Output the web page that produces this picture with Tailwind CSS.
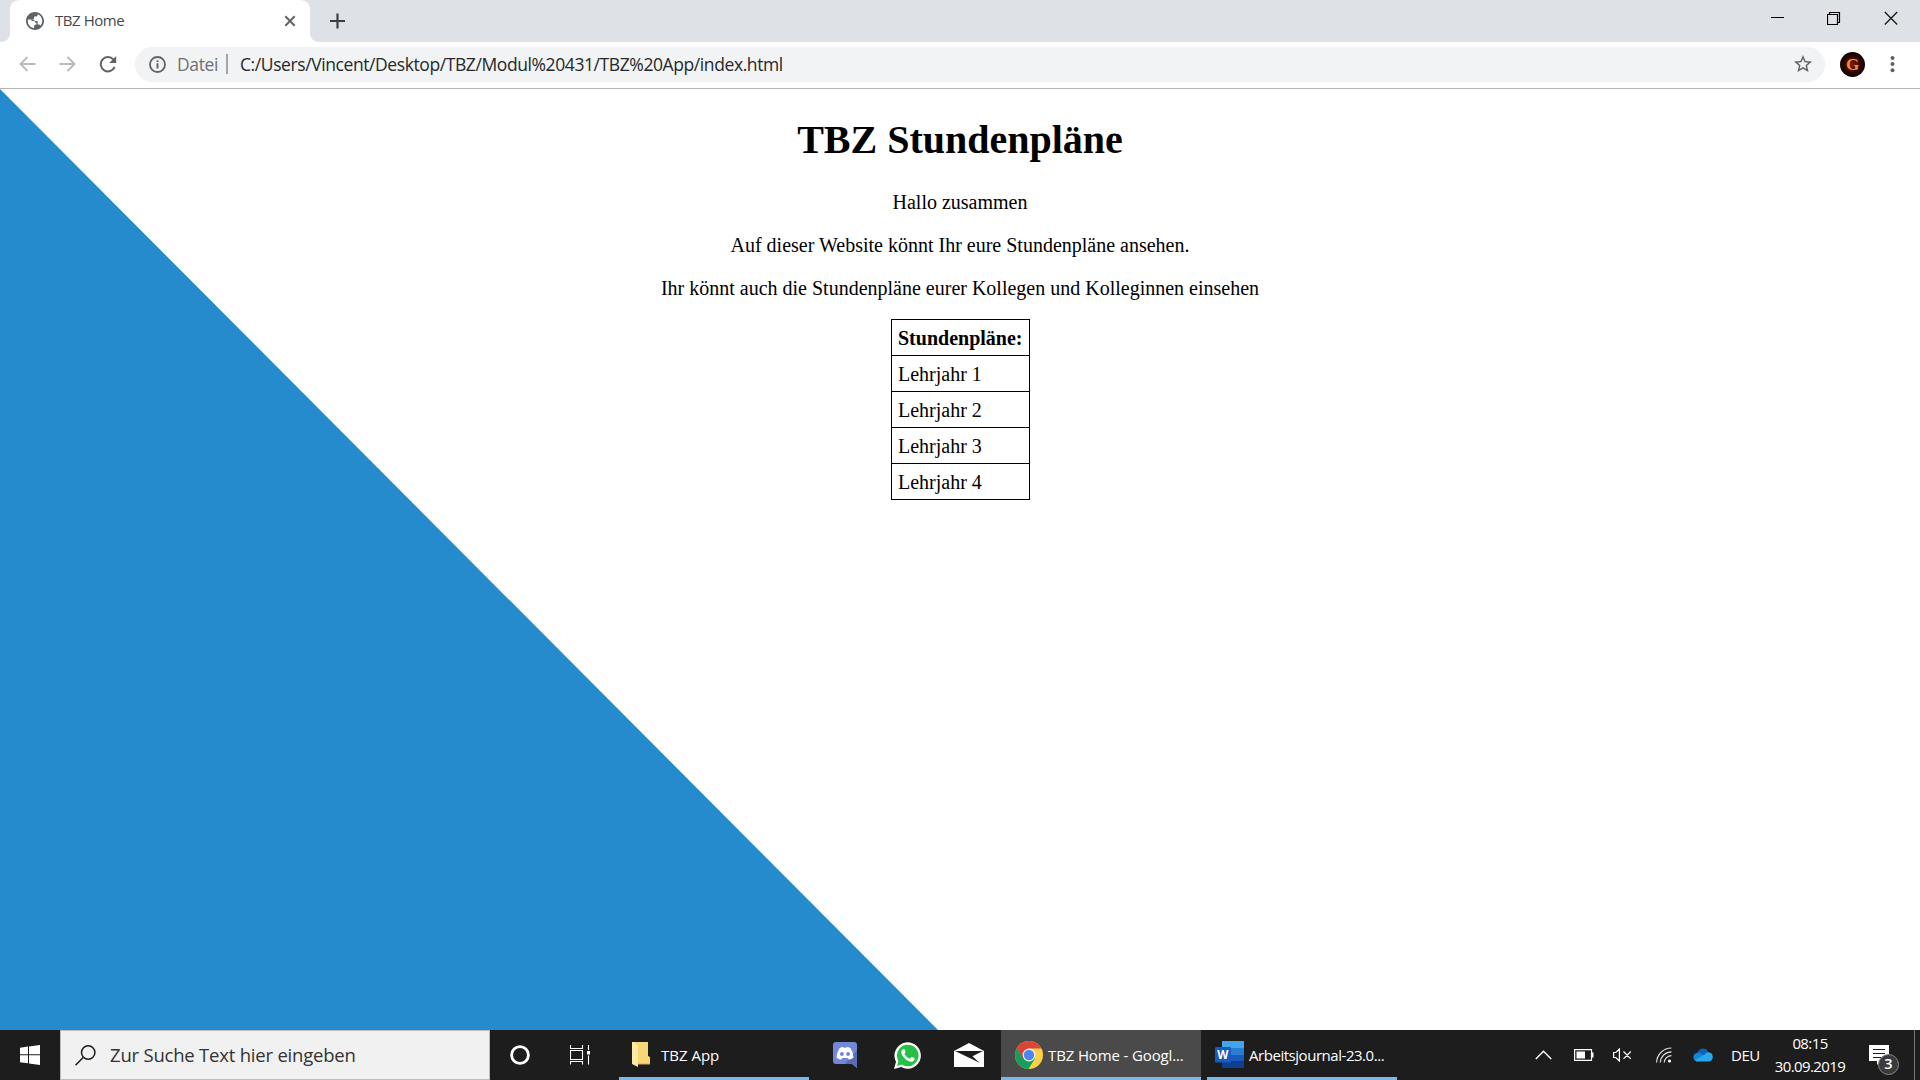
<!DOCTYPE html>
<html lang="de">
<head>
<meta charset="utf-8">
<title>TBZ Home</title>
<script src="https://cdn.jsdelivr.net/npm/@tailwindcss/browser@4"></script>
</head>
<body class="w-[1920px] h-[1080px] overflow-hidden flex flex-col bg-white font-['Open_Sans',sans-serif]">

<!-- Tab strip -->
<header class="h-[42px] shrink-0 bg-[#dee1e6] flex">
  <div class="w-[320px] h-[42px] relative shrink-0">
    <svg class="absolute inset-0" width="320" height="42"><path d="M0 42C7 42 10 38 10 32V10Q10 0 20 0H300Q310 0 310 10V32C310 38 313 42 320 42Z" fill="#fff"/></svg>
    <div class="relative flex items-center h-[42px] pl-[26px]">
      <svg width="18" height="18" viewBox="2 2 20 20" class="shrink-0"><path d="M12 2C6.480 2 2 6.480 2 12s4.480 10 10 10 10-4.480 10-10S17.520 2 12 2zm-1 17.930c-3.950-.49-7-3.850-7-7.930 0-.62.08-1.210.21-1.790h5.300c1.300 0 2.200.9 2.200 2s.9 1.700 1.900 1.900v1.900c-1.600 0-2.600.8-2.600 2zm6.900-2.540c-.26-.81-1-1.390-1.900-1.390h-1v-3c0-.55-.45-1-1-1H8v-2h2c.55 0 1-.45 1-1V7h2c1.100 0 2-.9 2-2v-.410c2.930 1.190 5 4.060 5 7.410 0 2.080-.8 3.970-2.100 5.390z" fill="#5f6368"/></svg>
      <span class="ml-[11px] mb-[2px] w-[216px] text-[15px] leading-5 tracking-[-0.45px] text-[#45494d]">TBZ Home</span>
      <svg class="ml-[13px] shrink-0" width="12" height="12" viewBox="0 0 12 12"><path d="M1.300 1.300l9.400 9.400M10.700 1.300l-9.400 9.400" stroke="#5f6368" stroke-width="2"/></svg>
    </div>
  </div>
  <svg class="mt-[13px] ml-[9px]" width="16" height="16" viewBox="0 0 16 16"><path d="M8.500 .5v15M1 8h15" stroke="#3c4043" stroke-width="2.200"/></svg>
  <div class="ml-auto flex pt-[11px]">
    <svg width="14" height="14" class="mr-[42px]"><path d="M0 6.500h13" stroke="#000"/></svg>
    <svg width="14" height="14" class="mr-[43px]"><path d="M.5 3.500h10v10h-10zM2.500 3V1.500h10v10h-1.500" fill="none" stroke="#000" stroke-width="1.200"/></svg>
    <svg width="14" height="14" class="mr-[22px]"><path d="M.8 1l12.400 12.500M13.200 1L.8 13.500" stroke="#111" stroke-width="1.200"/></svg>
  </div>
</header>

<!-- Toolbar -->
<div class="h-[47px] shrink-0 flex items-center pb-[2px] border-b border-[#b6b4b6] bg-white">
  <svg class="ml-[19px]" width="17" height="16" viewBox="0 0 17 16" fill="none" stroke="#b9bbbd" stroke-width="1.900"><path d="M16.500 8H2M8.500 1L1.500 8l7 7"/></svg>
  <svg class="ml-[23px]" width="17" height="16" viewBox="0 0 17 16" fill="none" stroke="#b9bbbd" stroke-width="1.900"><path d="M.5 8H15M8.500 1l7 7-7 7"/></svg>
  <svg class="ml-[23px]" width="18" height="18" viewBox="0 0 18 18"><path d="M15.600 12A7.200 7.200 0 1 1 14.300 4.300L16 5.500" fill="none" stroke="#5f6368" stroke-width="2"/><path d="M17.200 1v7h-7z" fill="#5f6368"/></svg>
  <div class="ml-[18px] w-[1690px] h-[35px] rounded-full bg-[#f1f3f4] flex items-center text-[17.500px] leading-6">
    <svg class="ml-[14px] shrink-0" width="17" height="17" viewBox="0 0 17 17"><circle cx="8.500" cy="8.500" r="7.500" fill="none" stroke="#5f6368" stroke-width="1.800"/><path d="M8.500 7.200v5.300M8.500 4.200v1.900" stroke="#5f6368" stroke-width="1.900"/></svg>
    <span class="ml-[11px] w-[41px] text-[#6d7175] tracking-[-0.350px]">Datei</span>
    <span class="ml-[8px] w-[2px] h-5 bg-[#a2a5a8]"></span>
    <span class="ml-[12px] text-[#26282b] tracking-[-0.410px] whitespace-nowrap">C:/Users/Vincent/Desktop/TBZ/Modul%20431/TBZ%20App/index.html</span>
    <svg class="ml-auto mr-[13px]" width="18" height="18" viewBox="2 2 20 20"><path d="M22 9.240l-7.190-.62L12 2 9.190 8.630 2 9.240l5.460 4.730L5.820 21 12 17.270 18.180 21l-1.630-7.030L22 9.240zM12 15.400l-3.760 2.270 1-4.280-3.320-2.880 4.380-.38L12 6.100l1.710 4.040 4.380.38-3.320 2.880 1 4.280L12 15.400z" fill="#5f6368"/></svg>
  </div>
  <div class="ml-[15px] size-[25px] rounded-full bg-[radial-gradient(circle,#7a1a05_0%,#2a0503_50%,#050101_75%)] flex items-center justify-center font-['Liberation_Serif',serif] font-bold text-[17px] leading-none text-[#ff8a2a]">G</div>
  <svg class="ml-[25px]" width="5" height="18" fill="#5f6368"><circle cx="2.500" cy="3" r="2"/><circle cx="2.500" cy="9" r="2"/><circle cx="2.500" cy="15.200" r="2"/></svg>
</div>

<!-- Web page -->
<main class="h-[941px] shrink-0 relative font-['Liberation_Serif',serif] text-black text-[20px] leading-[23px]">
  <svg class="absolute left-0 top-0" width="940" height="941"><path d="M0 0L938 941H0Z" fill="#268bcd"/></svg>
  <div class="relative flex flex-col items-center pt-[28px]">
    <h1 class="text-[40px] leading-[45px] font-bold">TBZ Stundenpläne</h1>
    <p class="mt-[29px]">Hallo zusammen</p>
    <p class="mt-5">Auf dieser Website könnt Ihr eure Stundenpläne ansehen.</p>
    <p class="mt-5">Ihr könnt auch die Stundenpläne eurer Kollegen und Kolleginnen einsehen</p>
    <div class="mt-[19px] w-[139px] border border-black divide-y divide-black ml-px">
      <div class="h-[36px] pl-[6px] pt-[7px] font-bold whitespace-nowrap">Stundenpläne:</div>
      <div class="h-[36px] pl-[6px] pt-[7px]">Lehrjahr 1</div>
      <div class="h-[36px] pl-[6px] pt-[7px]">Lehrjahr 2</div>
      <div class="h-[36px] pl-[6px] pt-[7px]">Lehrjahr 3</div>
      <div class="h-[35px] pl-[6px] pt-[7px]">Lehrjahr 4</div>
    </div>
  </div>
</main>

<!-- Taskbar -->
<footer class="h-[50px] shrink-0 bg-[#1d1d1d] flex text-white text-[15px] leading-5">
  <div class="w-[60px] flex items-center justify-center">
    <svg width="20" height="20" viewBox="0 0 20 20" fill="#fff"><path d="M0 2.700L8 1.500V9.200H0zM9 1.400L20 0V9.200H9zM0 10.200H8V18.300L0 17.200zM9 10.200H20V20L9 18.500z"/></svg>
  </div>
  <div class="w-[430px] border border-[#bcbcbc] bg-[#f1f1f1] flex items-center">
    <svg class="ml-[14px]" width="21" height="21" viewBox="0 0 21 21" fill="none" stroke="#1a1a1a" stroke-width="1.500"><circle cx="13.200" cy="7.500" r="6.700"/><path d="M8.400 12.200L.5 20.200"/></svg>
    <span class="ml-[14px] text-[18.500px] leading-6 tracking-[-0.210px] text-[#333]">Zur Suche Text hier eingeben</span>
  </div>
  <div class="w-[60px] flex items-center justify-center"><svg width="20" height="20"><circle cx="10" cy="10" r="8.400" fill="none" stroke="#fff" stroke-width="2.800"/></svg></div>
  <div class="w-[60px] flex items-center justify-center">
    <svg width="20" height="20" fill="none" stroke="#fff" stroke-width="1.100"><path d="M.5 0V3.500H12.500V0M.5 5.500H12.500V14.500H.5zM.5 19.500V16.500H12.500V19.500M18.500 0V5M18.500 10.500V19.500"/><path d="M17 6h3v3.500h-3z" fill="#fff" stroke="none"/></svg>
  </div>
  <div class="w-[190px] ml-[9px] border-b-[3px] border-[#76b9ed] flex items-center">
    <svg class="ml-[13px] mt-[3px]" width="19" height="26" viewBox="0 0 19 26"><path d="M2 0H16V14l2 1v7H4z" fill="#f7d774"/><path d="M0 0H2L6 3.500V25L0 22z" fill="#ffe9a6"/><path d="M6 22H18" stroke="#d9b04a"/></svg>
    <span class="ml-[10px] mt-[2px]">TBZ App</span>
  </div>
  <div class="w-[192px] flex items-center">
    <svg class="ml-[24px]" width="24" height="26" viewBox="0 0 24 26"><path d="M3 0H21Q24 0 24 3V26L19 22H3Q0 22 0 19V3Q0 0 3 0z" fill="#7289da"/><path d="M12 22H19L24 26V8z" fill="#596cb5"/><path d="M6.500 6.200Q8.500 4.800 10.200 4.900L10.700 5.700H13.300L13.800 4.900Q15.500 4.800 17.500 6.200Q20.500 11 20.500 15.500Q18.500 17.600 15.800 17.500L14.800 16H9.200L8.200 17.500Q5.500 17.600 3.500 15.500Q3.500 11 6.500 6.200z" fill="#fff"/><circle cx="8.900" cy="12" r="1.900" fill="#7185d0"/><circle cx="15.100" cy="12" r="1.900" fill="#7185d0"/></svg>
    <svg class="ml-[37px]" width="27" height="27" viewBox="0 0 27 27"><path d="M0 27L2 19.800A13.200 13.200 0 1 1 7.200 25.100z" fill="#fff"/><path d="M3 24L4.500 19A10.800 10.800 0 1 1 8 22.600z" fill="#25c046"/><path d="M9.200 7.300C10.200 6.800 10.600 7.200 11.500 9.700 11.700 10.600 10.300 11.600 10.500 12 12 14.500 13.500 15.800 15.900 16.700L17.400 15Q17.800 14.700 20.500 16.200C21 17 20 19.400 17.500 19.700 13.500 20 7.500 14.500 7.200 10.600 7.100 9 8.100 7.700 9.200 7.300z" fill="#fff"/></svg>
    <svg class="ml-[33px]" width="30" height="24" viewBox="0 0 30 24"><path d="M0 8L15 0L30 8V24H0z" fill="#fff"/><path d="M1 8H29L18.500 13.200L25.500 19.800L1 8z" fill="#1d1d1d"/></svg>
  </div>
  <div class="w-[200px] bg-[#4a4a4a] border-b-[3px] border-[#76b9ed] flex items-center">
    <svg class="ml-[14px] mt-[2px] shrink-0" width="28" height="28" viewBox="0 0 28 28"><circle cx="14" cy="14" r="14" fill="#fdd04a"/><path d="M14 14L1.900 7A14 14 0 0 0 13.500 28L20 17.500z" fill="#169f5c"/><path d="M1.900 7A14 14 0 0 1 26.400 7.600H14L8 17.500z" fill="#db4437"/><circle cx="14" cy="14" r="6.400" fill="#f4f4f4"/><circle cx="14" cy="14" r="5.200" fill="#4c86f0"/></svg>
    <span class="ml-[5px] mt-[2px] tracking-[-0.130px] whitespace-nowrap">TBZ Home - Googl...</span>
  </div>
  <div class="w-[190px] ml-[6px] border-b-[3px] border-[#76b9ed] flex items-center">
    <svg class="ml-[8px] mt-[2px] shrink-0" width="29" height="27" viewBox="0 0 29 27"><path d="M7 0H29V7H7z" fill="#41a5ee"/><path d="M7 7H29V14H7z" fill="#2b7cd3"/><path d="M7 14H29V20.500H7z" fill="#185abd"/><path d="M7 20.500H29V27H7z" fill="#103f91"/><rect y="6" width="16" height="15.500" rx="1.200" fill="#185abd"/><text x="7.800" y="18" text-anchor="middle" font-family="Open Sans" font-weight="700" font-size="11.500" fill="#fff">W</text></svg>
    <span class="ml-[5px] mt-[2px] tracking-[-0.460px] whitespace-nowrap">Arbeitsjournal-23.0...</span>
  </div>
  <div class="ml-auto flex items-center">
    <svg width="17" height="10" class="mr-[22px]"><path d="M.8 9L8.500 1.200L16.200 9" fill="none" stroke="#fff" stroke-width="1.400"/></svg>
    <svg width="20" height="12" class="mr-[19px]"><path d="M.6.600H17.500V11.400H.6z" fill="none" stroke="#fff" stroke-width="1.200"/><path d="M2.500 2.500H11V9.500H2.500zM18 3.500H19.500V8.500H18z" fill="#fff"/></svg>
    <svg width="19" height="14" class="mr-[24px]" fill="none" stroke="#fff" stroke-width="1.200"><path d="M.6 4.500H2.800L6.400 1V13L2.800 9.500H.6zM10.500 3.500L17.800 10.800M17.800 3.500L10.500 10.800"/></svg>
    <svg width="16" height="16" class="mr-[21px]" fill="none" stroke="#ddd" stroke-width="1.200"><path d="M.6 15.500A15 15 0 0 1 15.500 1M4.300 15.500A11.300 11.300 0 0 1 15.500 4.800M8.200 15.500A7.500 7.500 0 0 1 15.500 8.600"/><circle cx="13.500" cy="14" r="1.600" fill="#fff" stroke="none"/></svg>
    <svg width="20" height="14" class="mr-[18px]" viewBox="0 0 20 14"><path d="M4.500 5A5.700 5.700 0 0 1 15.300 4L14 10H3z" fill="#0f5fb8"/><path d="M4.500 4.800Q7 4.300 9 6L14 9.500L5 13.500A4.300 4.300 0 0 1 4.500 4.800z" fill="#1684d9"/><path d="M15 4.200A4.700 4.700 0 0 1 16 13.500H4.700Q2.800 13.500 2 12.300L11.500 6.500Q13 4.500 15 4.200z" fill="#28a8ea"/></svg>
    <span class="w-[28px] tracking-[-0.500px]">DEU</span>
    <div class="ml-[13px] w-[76px] text-center leading-[23px] tracking-[-0.600px] whitespace-nowrap">08:15<br>30.09.2019</div>
    <div class="relative ml-[21px] w-[30px] h-[30px] mt-[10px]">
      <svg width="20" height="20" viewBox="0 0 20 20"><path d="M0 0H20V16H12L8 20V16H0z" fill="#fff"/><path d="M4 4.500H16M4 8.500H16M4 12.500H12" stroke="#1d1d1d" stroke-width="1.200"/></svg>
      <span class="absolute left-[9px] top-[9px] size-[21px] rounded-full border border-[#8a8a8a] bg-[#3b3b3b] flex items-center justify-center text-[14.500px] font-semibold leading-none">3</span>
    </div>
    <div class="ml-[15px] mr-[5px] w-px h-[50px] bg-[#777]"></div>
  </div>
</footer>
</body>
</html>
